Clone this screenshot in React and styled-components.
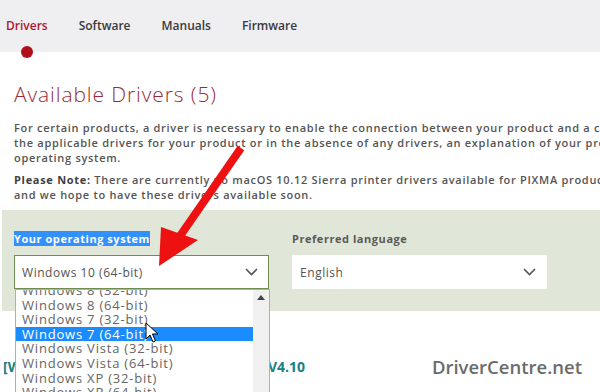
import React from 'react'
import styled, { createGlobalStyle } from 'styled-components';

const GlobalStyle = createGlobalStyle`
    body {
        margin: 0;
        font-family: "Open Sans", "Liberation Sans", sans-serif;
        background: #fff;
    }
`

const tabs = ['Drivers', 'Software', 'Manuals', 'Firmware'];

const systems = [
    'Windows 8 (32-bit)',
    'Windows 8 (64-bit)',
    'Windows 7 (32-bit)',
    'Windows 7 (64-bit)',
    'Windows Vista (32-bit)',
    'Windows Vista (64-bit)',
    'Windows XP (32-bit)',
    'Windows XP (64-bit)',
];

const Chevron = () => (
    <svg width="13" height="8" viewBox="0 0 13 8">
        <path d="M1 1 L6.5 6.5 L12 1" fill="none" stroke="#555" strokeWidth="1.6" />
    </svg>
)

const App = () => {
    return (
        <Page>
            <GlobalStyle />
            <TabBar>
                {tabs.map(t => (
                    <Tab key={t} active={t === 'Drivers'}>{t}</Tab>
                ))}
            </TabBar>

            <Content>
                <Title>Available Drivers (5)</Title>
                <Text>
                    For certain products, a driver is necessary to enable the connection between your product and a computer. On this tab, you will find<br />
                    the applicable drivers for your product or in the absence of any drivers, an explanation of your product's compatibility with each<br />
                    operating system.
                </Text>
                <Text>
                    <b>Please Note:</b> There are currently no macOS 10.12 Sierra printer drivers available for PIXMA products. We are working on this<br />
                    and we hope to have these drivers available soon.
                </Text>
            </Content>

            <Panel>
                <Field>
                    <Label><Selected>Your operating system</Selected></Label>
                    <SelectBox bordered>
                        <span>Windows 10 (64-bit)</span>
                        <Chevron />
                    </SelectBox>
                    <DropList>
                        <Options>
                            {systems.map(s => (
                                <Option key={s} active={s === 'Windows 7 (64-bit)'}>{s}</Option>
                            ))}
                        </Options>
                        <Scrollbar>
                            <svg width="8" height="5" viewBox="0 0 8 5"><path d="M0 5 L4 0 L8 5 Z" fill="#444" /></svg>
                            <Thumb />
                        </Scrollbar>
                    </DropList>
                </Field>
                <Field>
                    <Label>Preferred language</Label>
                    <SelectBox>
                        <span>English</span>
                        <Chevron />
                    </SelectBox>
                </Field>
            </Panel>

            <Results>
                <DriverTitle>
                    <span>[Windows 10 (64-bit)] PIXMA</span>
                    <span>V4.10</span>
                </DriverTitle>
                <Watermark>DriverCentre.net</Watermark>
            </Results>

            <Arrow width="600" height="392" viewBox="0 0 600 392">
                <line x1="241" y1="148" x2="180" y2="236" stroke="#ee1111" strokeWidth="8" />
                <path d="M159 266 L161 227 L198 240 Z" fill="#ee1111" />
            </Arrow>

            <Cursor width="14" height="22" viewBox="0 0 14 22">
                <path d="M1 1 L1 17 L5 13 L8 20 L10.5 19 L7.5 12 L13 12 Z" fill="#fff" stroke="#000" strokeWidth="1" strokeLinejoin="round" />
            </Cursor>
        </Page>
    )
}

export default App;

const Page = styled.div`
    position: relative;
    width: 600px;
    height: 392px;
    overflow: hidden;
    background: #fff;
`

const TabBar = styled.div`
    display: flex;
    align-items: center;
    gap: 31px;
    height: 52px;
    padding-left: 6px;
    background: #efeef1;
`

const Tab = styled.div`
    position: relative;
    font-size: 12px;
    font-weight: 600;
    color: ${props => props.active ? '#b0182c' : '#3a3a3a'};
    line-height: 52px;

    &::after {
        content: '';
        display: ${props => props.active ? 'block' : 'none'};
        position: absolute;
        left: 15px;
        bottom: -6px;
        width: 12px;
        height: 12px;
        border-radius: 50%;
        background: #b0101c;
    }
`

const Content = styled.div`
    padding: 27px 14px 0;
    height: 131px;
    overflow: hidden;
    white-space: nowrap;
`

const Title = styled.h1`
    margin: 0 0 11px;
    font-size: 21px;
    font-weight: 300;
    letter-spacing: 0.9px;
    line-height: 30px;
    color: #9a2a38;
`

const Text = styled.p`
    margin: 0 0 7px;
    font-size: 11px;
    font-weight: 600;
    letter-spacing: 0.7px;
    line-height: 15px;
    color: #555;

    b {
        color: #3f3f3f;
        font-weight: 700;
    }
`

const Panel = styled.div`
    display: flex;
    gap: 23px;
    height: 101px;
    box-sizing: border-box;
    margin-left: 2px;
    padding: 22px 12px 0;
    background: #e0e6d8;
`

const Field = styled.div`
    position: relative;
    display: flex;
    flex-direction: column;
    width: 255px;
`

const Label = styled.div`
    height: 13px;
    margin-bottom: 10px;
    font-size: 11px;
    font-weight: 700;
    letter-spacing: 0.55px;
    line-height: 13px;
    color: #5a5a55;
`

const Selected = styled.span`
    background: #3390ff;
    color: #fff;
`

const SelectBox = styled.div`
    display: flex;
    align-items: center;
    justify-content: space-between;
    height: 34px;
    box-sizing: border-box;
    padding: 0 10px 0 7px;
    background: #fff;
    border: 1px solid ${props => props.bordered ? '#6e8d4f' : '#fff'};
    font-size: 12px;
    letter-spacing: 0.55px;
    color: #555;
`

const DropList = styled.div`
    position: absolute;
    z-index: 2;
    top: 57px;
    left: 1px;
    width: 253px;
    height: 110px;
    display: flex;
    background: #fff;
    border: 1px solid #a8b0b8;
    border-bottom: none;
    overflow: hidden;
`

const Options = styled.div`
    flex: 1;
    margin-top: -7px;
`

const Option = styled.div`
    height: 14.6px;
    padding-left: 6px;
    font-size: 13px;
    letter-spacing: 0.8px;
    line-height: 15px;
    color: ${props => props.active ? '#fff' : '#666'};
    background: ${props => props.active ? '#1a8cff' : 'transparent'};
`

const Scrollbar = styled.div`
    display: flex;
    flex-direction: column;
    align-items: center;
    justify-content: space-between;
    width: 16px;
    padding-top: 5px;
    background: #f0f0f0;
`

const Thumb = styled.div`
    width: 12px;
    height: 6px;
    background: #c2c2c2;
`

const Results = styled.div`
    display: flex;
    align-items: center;
    justify-content: space-between;
    padding: 43px 18px 0 3px;
`

const DriverTitle = styled.div`
    display: flex;
    justify-content: space-between;
    width: 302px;
    font-size: 14px;
    font-weight: 700;
    color: #1a7f86;
    white-space: nowrap;
    overflow: hidden;
`

const Watermark = styled.div`
    font-size: 18.5px;
    font-weight: 600;
    color: #6b6b6b;
`

const Arrow = styled.svg`
    position: absolute;
    z-index: 3;
    top: 0;
    left: 0;
    pointer-events: none;
`

const Cursor = styled.svg`
    position: absolute;
    z-index: 4;
    top: 322px;
    left: 145px;
`
